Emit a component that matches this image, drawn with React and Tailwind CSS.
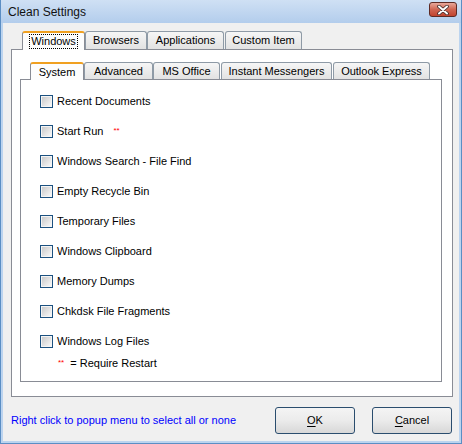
import React from "react";

const outerTabs = [
  { label: "Windows", w: "w-[63px]", selected: true },
  { label: "Browsers", w: "w-[62px]" },
  { label: "Applications", w: "w-[77px]" },
  { label: "Custom Item", w: "w-[77px] ml-[1px]" },
];

const innerTabs = [
  { label: "System", w: "w-[54px]", selected: true },
  { label: "Advanced", w: "w-[69px]" },
  { label: "MS Office", w: "w-[67px]" },
  { label: "Instant Messengers", w: "w-[111px] ml-[1px]" },
  { label: "Outlook Express", w: "w-[97px] ml-[1px]" },
];

const items = [
  { label: "Recent Documents" },
  { label: "Start Run", restart: true },
  { label: "Windows Search - File Find" },
  { label: "Empty Recycle Bin" },
  { label: "Temporary Files" },
  { label: "Windows Clipboard" },
  { label: "Memory Dumps" },
  { label: "Chkdsk File Fragments" },
  { label: "Windows Log Files" },
];

function Tab({ label, w, selected, focus, height }) {
  if (selected) {
    return (
      <div
        className={`${w} ${height} relative flex items-center justify-center bg-[#fdfdfd] border border-b-0 border-[#898c95] border-t-[#f0a020] border-t-2 rounded-t-[3px]`}
      >
        <span className={focus ? "px-[1px] leading-[13px] border border-dotted border-black" : ""}>
          {label}
        </span>
      </div>
    );
  }
  return (
    <div
      className={`${w} h-full flex items-center justify-center bg-gradient-to-b from-[#f6f6f6] to-[#e2e2e2] border border-b-0 border-[#8e9aa6] rounded-t-[3px]`}
    >
      {label}
    </div>
  );
}

function Checkbox() {
  return (
    <div className="w-[13px] h-[13px] border border-[#1c5180] p-px bg-[#f4f4f4] shrink-0">
      <div className="w-full h-full bg-gradient-to-br from-[#cbcbcb] to-[#f7f7f7]" />
    </div>
  );
}

export default function App() {
  return (
    <div className="w-[462px] h-[444px] flex flex-col bg-[#bcd4ef] border-x border-b border-[#5b8ec4] font-['Liberation_Sans',Arial,sans-serif] text-[11px] text-black overflow-hidden">
      {/* Title bar */}
      <div className="h-[23px] shrink-0 flex items-center justify-between pl-[7px] pr-[4px] bg-gradient-to-b from-[#cfe0f4] to-[#b3cdec]">
        <span className="text-[12px] text-[#111]">Clean Settings</span>
        <div className="w-[28px] h-[15px] mb-[4px] rounded-[3px] border border-[#5e2a24] bg-gradient-to-b from-[#e7a79a] via-[#cf6552] to-[#c2432e] flex items-center justify-center">
          <svg width="12" height="10" viewBox="0 0 12 10">
            <path d="M2 1.5 L10 8.5 M10 1.5 L2 8.5" stroke="#3c2a2a" strokeWidth="3.6" strokeLinecap="round" />
            <path d="M2 1.5 L10 8.5 M10 1.5 L2 8.5" stroke="#ffffff" strokeWidth="2" strokeLinecap="round" />
          </svg>
        </div>
      </div>

      {/* Body */}
      <div className="flex-1 mx-[2px] mb-[2px] bg-[#f0f0f0] flex flex-col pt-[8px] pl-[8px] pr-[6px]">
        {/* Outer tabs */}
        <div className="flex items-start h-[18px] ml-[11px] relative z-10">
          {outerTabs.map((t) => (
            <Tab key={t.label} {...t} focus height="h-[19px]" />
          ))}
        </div>
        <div className="h-[348px] border border-[#898c95] bg-white flex flex-col pl-[8px] pr-[10px]">
          {/* Inner tabs */}
          <div className="flex items-start h-[17px] mt-[12px] ml-[10px] relative z-10">
            {innerTabs.map((t) => (
              <Tab key={t.label} {...t} height="h-[18px]" />
            ))}
          </div>
          <div className="h-[303px] border border-[#898c95] bg-white pl-[19px] pt-[6px] flex flex-col">
            {items.map((it) => (
              <div key={it.label} className="h-[30px] flex items-center">
                <Checkbox />
                <span className="ml-[4px]">{it.label}</span>
                {it.restart && (
                  <span className="ml-[10px] text-[8px] text-[#ff0000] leading-none">**</span>
                )}
              </div>
            ))}
            <div className="h-[14px] flex items-center ml-[18px]">
              <span className="text-[8px] text-[#ff0000] leading-none">**</span>
              <span className="ml-[6px]">= Require Restart</span>
            </div>
          </div>
        </div>

        {/* Bottom bar */}
        <div className="flex items-center mt-[10px] h-[27px] pr-[1px]">
          <span className="text-[#0000ff] ml-[0px] text-[11px]">
            Right click to popup menu to select all or none
          </span>
          <div className="ml-auto flex gap-[17px]">
            <button className="w-[80px] h-[27px] rounded-[3px] border border-[#2a4d6e] bg-gradient-to-b from-[#f4f4f4] via-[#ebebeb] to-[#d8d8d8] text-[11px]">
              <span className="underline underline-offset-2">O</span>K
            </button>
            <button className="w-[80px] h-[27px] rounded-[3px] border border-[#2a4d6e] bg-gradient-to-b from-[#f4f4f4] via-[#ebebeb] to-[#d8d8d8] text-[11px]">
              <span className="underline underline-offset-2">C</span>ancel
            </button>
          </div>
        </div>
      </div>
    </div>
  );
}
